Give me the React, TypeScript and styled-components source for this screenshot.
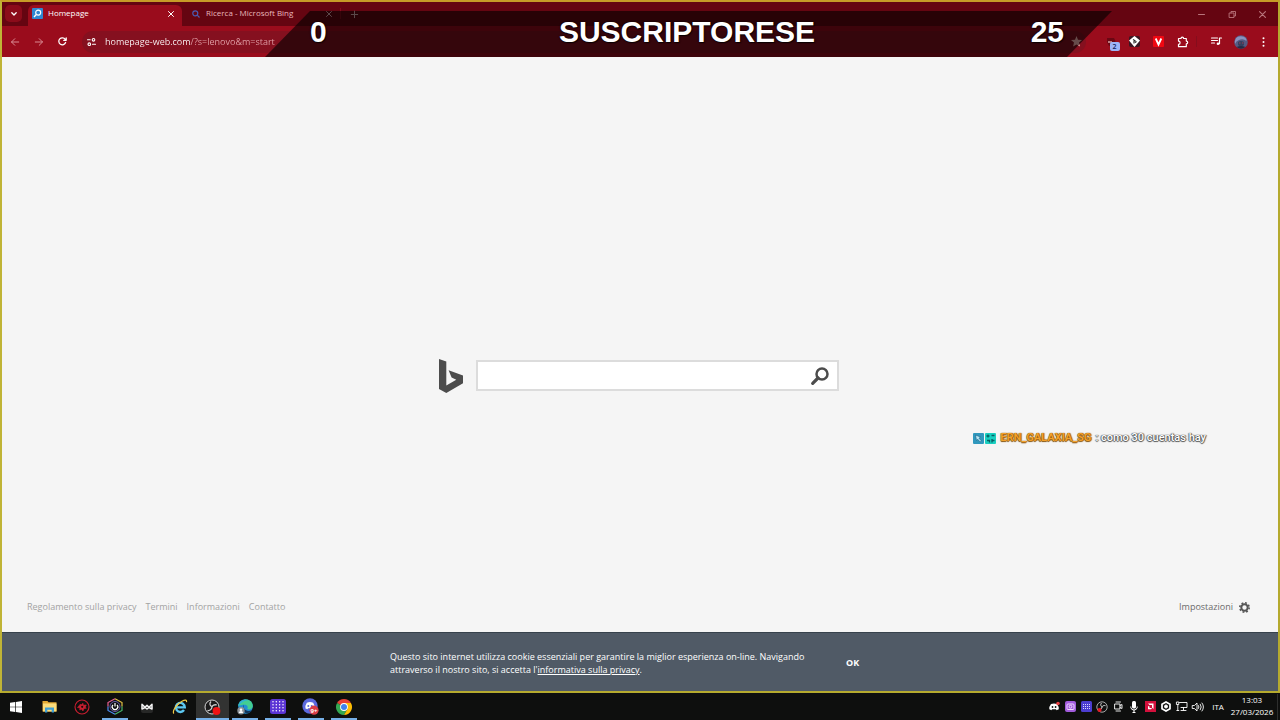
import React from "react";
import styled, { createGlobalStyle } from "styled-components";

const ui = `"Open Sans", "Noto Sans", sans-serif`;

const Global = createGlobalStyle`
  * { box-sizing: border-box; }
  html, body { margin: 0; padding: 0; background: #0e0f0e; }
  body { font-family: ${ui}; }
  button, input { font: inherit; border: 0; padding: 0; margin: 0; background: none; color: inherit; outline: none; }
  svg { display: block; flex: none; overflow: visible; }
`;

const Desktop = styled.div`
  min-height: 100vh;
  display: flex;
  flex-direction: column;
`;

const BrowserWindow = styled.section`
  position: relative;
  flex: 1;
  display: flex;
  flex-direction: column;
  border: 2px solid #b5aa2e;
  border-top-color: #c79b27;
  border-left-color: #c0b436;
  background: #f5f5f5;
`;

/* ---------- browser chrome ---------- */

const TabStrip = styled.div`
  height: 24px;
  padding: 3px 2px 0 3px;
  display: flex;
  align-items: stretch;
  background: #650511;
  color: #e2b3b7;
  font-size: 8px;
`;

const TabSearch = styled.button`
  width: 17px;
  height: 17px;
  margin-right: 6px;
  border-radius: 5px;
  background: #8b0b1a;
  display: grid;
  place-items: center;
  color: #fff;
`;

const Tab = styled.div<{ $active?: boolean }>`
  width: ${(p) => (p.$active ? 154 : 157)}px;
  padding: 0 ${(p) => (p.$active ? 8 : 7)}px 4px ${(p) => (p.$active ? 4 : 10)}px;
  display: flex;
  align-items: center;
  gap: ${(p) => (p.$active ? 5 : 6)}px;
  border-radius: 6px 6px 0 0;
  background: ${(p) => (p.$active ? "#9a0c1c" : "transparent")};
  color: ${(p) => (p.$active ? "#fff" : "#e8b7bc")};
`;

const TabTitle = styled.span`
  flex: 1;
  white-space: nowrap;
  line-height: 12px;
  padding-bottom: 1px;
`;

const IconButton = styled.button<{ $w?: number }>`
  width: ${(p) => p.$w ?? 24}px;
  height: 18px;
  display: grid;
  place-items: center;
`;

const Divider = styled.span`
  width: 1px;
  height: 11px;
  margin: 3px 1px;
  background: #850d1c;
`;

const WindowControls = styled.div`
  margin-left: auto;
  display: flex;
  color: #b9757c;
`;

const Toolbar = styled.div`
  height: 31px;
  padding: 0;
  display: flex;
  align-items: center;
  background: #9a0c1c;
  color: #fff;
`;

const Faded = styled.span`
  display: flex;
  color: #d98a92;
`;

const AddressBar = styled.label`
  flex: 1;
  height: 22px;
  margin: 0 13px 0 8px;
  padding: 0 4px 0 5px;
  display: flex;
  align-items: center;
  gap: 9px;
  border-radius: 11px;
  background: #85101f;
`;

const AddressInput = styled.input`
  flex: 1;
  min-width: 0;
  height: 16px;
  font-size: 9px;
  color: transparent;
  background: linear-gradient(90deg, #ffffff 85px, #e3a3aa 85px);
  background-clip: text;
  -webkit-background-clip: text;
`;

const Extensions = styled.div`
  display: flex;
  align-items: center;
`;

const Badged = styled.span`
  position: relative;
  display: grid;
`;

const Badge = styled.span`
  position: absolute;
  left: 4px;
  top: 5px;
  width: 10px;
  height: 9px;
  border-radius: 2px;
  background: #9db4f7;
  color: #14235c;
  font-size: 7px;
  line-height: 9px;
  font-weight: 600;
  text-align: center;
`;

/* ---------- stream overlays ---------- */

const Goal = styled.div`
  position: absolute;
  top: 9px;
  left: 263px;
  right: 166px;
  height: 46px;
  padding: 0 48px 4px 45px;
  display: grid;
  grid-template-columns: 1fr auto 1fr;
  align-items: center;
  clip-path: polygon(45px 0, 100% 0, calc(100% - 45px) 100%, 0 100%);
  background: rgba(0, 0, 0, 0.6);
  color: #fff;
  font: bold 30px "Liberation Sans", Arial, sans-serif;
  text-shadow: 0 0 2px #000, 1px 1px 1px rgba(0, 0, 0, 0.7);
  & > :last-child { text-align: right; }
`;

const Chat = styled.p`
  position: absolute;
  right: 72px;
  top: 428px;
  margin: 0;
  display: flex;
  align-items: center;
  gap: 4px;
  color: #fff;
  font: 500 11px/16px Roboto, "Open Sans", sans-serif;
  text-shadow: 0 0 1px #333, 1px 0 1px #666, 0 1px 1px #555, -1px 0 1px #888;
`;

const ChatName = styled.strong`
  color: #f3a12c;
  font-weight: 700;
  text-shadow: 0 0 1px #6b3d00, 1px 0 1px #9a6312, 0 1px 1px #85520a;
`;

const Badges = styled.span`
  display: flex;
  gap: 1px;
`;

/* ---------- page ---------- */

const Page = styled.main`
  flex: 1;
  display: flex;
  flex-direction: column;
`;

const SearchArea = styled.div`
  flex: 1;
  padding: 100px 2px 0 0;
  display: flex;
  align-items: center;
  justify-content: center;
`;

const SearchForm = styled.form`
  display: flex;
  align-items: center;
  gap: 13px;
`;

const SearchBox = styled.div`
  width: 363px;
  height: 31px;
  display: flex;
  border: 2px solid #dcdcdc;
  background: #fff;
`;

const SearchInput = styled.input`
  flex: 1;
  padding: 0 8px;
  color: #333;
  font-size: 12px;
`;

const SearchButton = styled.button`
  width: 34px;
  display: grid;
  place-items: center;
`;

const FooterRow = styled.footer`
  height: 38px;
  padding: 6px 28px 0 25px;
  display: flex;
  justify-content: space-between;
  align-items: flex-start;
  font-size: 9px;
  line-height: 14px;
`;

const FooterLinks = styled.nav`
  display: flex;
  gap: 9px;
`;

const FooterLink = styled.a<{ $dark?: boolean }>`
  display: flex;
  align-items: center;
  gap: 6px;
  color: ${(p) => (p.$dark ? "#6a6a6a" : "#a3a3a3")};
  text-decoration: none;
`;

const CookieBar = styled.aside`
  height: 59px;
  display: flex;
  align-items: center;
  justify-content: center;
  gap: 24px;
  border-top: 1px solid #37424c;
  background: #505a66;
  color: #fff;
  font-size: 9px;
  line-height: 13px;
`;

const CookieText = styled.p`
  width: 432px;
  margin: 2px 0 0;
`;

const CookieLink = styled.a`
  color: inherit;
`;

const CookieOk = styled.button`
  width: 32px;
  height: 20px;
  margin-right: 12px;
  text-align: left;
  font-weight: 700;
`;

/* ---------- taskbar ---------- */

const Taskbar = styled.footer`
  height: 27px;
  padding-right: 2px;
  display: flex;
  justify-content: space-between;
  background: #0e0f0e;
  color: #fff;
`;

const Apps = styled.div`
  width: 360px;
  display: grid;
  grid-template-columns: repeat(11, 1fr);
`;

const AppButton = styled.button<{ $running?: boolean; $active?: boolean }>`
  display: grid;
  place-items: center;
  background: ${(p) => (p.$active ? "#323332" : "transparent")};
  &::after {
    content: "";
    grid-area: 1 / 1;
    align-self: end;
    width: ${(p) => (p.$active ? "100%" : "26px")};
    height: 2px;
    background: ${(p) => (p.$running ? "#76b0e8" : "transparent")};
  }
  & > svg { grid-area: 1 / 1; }
`;

const Tray = styled.div`
  display: flex;
  align-items: center;
  font-size: 8px;
`;

const TrayButton = styled.button<{ $w?: number }>`
  width: ${(p) => p.$w ?? 16}px;
  height: 27px;
  display: grid;
  place-items: center;
`;

const Clock = styled.time`
  width: 48px;
  padding: 0 3px 2px 0;
  display: block;
  text-align: center;
  line-height: 12px;
  border-right: 1px solid #2d2e2d;
`;

const stroke = { fill: "none", stroke: "currentColor", strokeLinecap: "round", strokeLinejoin: "round" } as const;

const Cross = ({ size = 6 }: { size?: number }) => (
  <svg width={size} height={size} viewBox="0 0 6 6" {...stroke} strokeWidth="1"><path d="M.5.5l5 5M5.5.5l-5 5" /></svg>
);

const BingLogo = () => (
  <svg width="24" height="34" viewBox="0 0 24 34" fill="#4c4c4c" aria-label="Bing">
    <path d="M0 0L7.3 2.6V26.6L17.3 20.7L12.6 18.6L9.6 11.3L24 16.4V24.3L7.3 34L0 30Z" />
  </svg>
);

const taskIcons: { name: string; running?: boolean; active?: boolean; icon: React.ReactNode }[] = [
  { name: "Start", icon: <svg width="12" height="12" viewBox="0 0 12 12" fill="#fff"><path d="M0 1.8L5.2 1v4.7H0zM5.9.9L12 0v5.7H5.9zM0 6.3h5.2V11L0 10.2zM5.9 6.3H12V12l-6.1-.9z" /></svg> },
  { name: "Esplora file", icon: <svg width="15" height="13" viewBox="0 0 15 13"><path d="M.5 1h5l1 1.2h8V11.500H.5z" fill="#e3a934" /><path d="M1 3.500h13.500v8H1z" fill="#fbdc7c" /><path d="M3 12.500V7.500h9v5H9.700V9.800H5.300v2.700z" fill="#3f9fd6" /></svg> },
  { name: "Gioco", icon: <svg width="16" height="16" viewBox="0 0 16 16" fill="none" stroke="#c81f30"><circle cx="8" cy="8" r="7" strokeWidth="1.100" /><path d="M3.500 8.500L6.500 5l.3 1.200L9 4.200l.3 2 3-.2L11.300 8l1 1.300-2.300.2-1 2.500-1.500-1.700-1.800.7L6 9z" fill="#c81f30" strokeWidth=".6" /><circle cx="8.200" cy="7.800" r="1.100" fill="#1a0808" stroke="none" /></svg> },
  { name: "Centro energia", running: true, icon: <svg width="16" height="17" viewBox="0 0 16 17" fill="none" strokeWidth="1.200"><path d="M1 8.500V4.500L8 .7" stroke="#e85f91" /><path d="M8 .7l7 3.800v4" stroke="#e5c144" /><path d="M15 8.500v4L8 16.300" stroke="#47b86c" /><path d="M8 16.300L1 12.500v-4" stroke="#4c8df0" /><circle cx="8" cy="8.500" r="5" stroke="#7c70cf" strokeWidth=".8" /><path d="M6 6.800a2.800 2.800 0 1 0 4 0M8 5v3.500" stroke="#fff" /></svg> },
  { name: "Mixer", icon: <svg width="14" height="13" viewBox="0 0 14 13"><rect x="1" y="6" width="12" height="7" rx="2" fill="#272827" /><path d="M2 9V4.300L5 7.300 7 5.300 9 7.300 12 4.300V9L9 7.500 7 9 5 7.500z" fill="none" stroke="#f2f2f2" strokeWidth="1.500" strokeLinejoin="round" /></svg> },
  { name: "Internet Explorer", icon: <svg width="16" height="16" viewBox="0 0 16 16" fill="none"><path d="M4.200 8.400h8.600A4.500 4.500 0 1 0 12 11" stroke="#5dc9f2" strokeWidth="2.400" /><path d="M2 14.500C-.5 13 4.500 5 10 2.200c3-1.500 5-1.500 4.500 1" stroke="#f3cb45" strokeWidth="1.200" /></svg> },
  { name: "OBS Studio", running: true, active: true, icon: <svg width="17" height="16" viewBox="0 0 17 16"><circle cx="8" cy="8" r="7" fill="#1b1b1b" stroke="#d5d5d5" strokeWidth="1" /><path d="M7 2.500c-2 2-1 4.500 1 5M12.800 6c-2.300-.8-4.500.5-4.800 2M3.500 11.500c2.500.5 4.500-1.500 4.500-4" fill="none" stroke="#cfcfcf" strokeWidth="1.300" /><circle cx="12.500" cy="12" r="3.900" fill="#ef1313" /></svg> },
  { name: "Microsoft Edge", running: true, icon: <svg width="16" height="16" viewBox="0 0 16 16"><circle cx="8.500" cy="7.500" r="7.300" fill="#238fd4" /><path d="M1.300 7C2-1.500 15.500-2 15.800 7c0 3.500-4 4-5.600 2.800 1.200-1.500.3-4-2.700-4C5 5.800 2.500 6.500 1.300 7z" fill="#43ce91" /><path d="M1.300 7C2 1 8-.5 11.500 1.500 7 1 4 4 1.300 7z" fill="#2fb0d8" /><path d="M7 5.500q-1.500 3 1.500 5.500 3 1.800 6 .3l.5.500Q11 16 7 13z" fill="#12365c" /><circle cx="4" cy="11.800" r="3.700" fill="#8d9297" /><circle cx="4" cy="10.700" r="1.300" fill="#fff" /><path d="M1.900 14a2.100 2.100 0 0 1 4.200 0z" fill="#fff" /></svg> },
  { name: "Tastiera", running: true, icon: <svg width="16" height="15" viewBox="0 0 16 15"><rect width="16" height="15" rx="2.500" fill="#5b35d5" /><g fill="#fff">{[3, 6, 9, 12].map((y) => [3, 6.300, 9.600, 13].map((x) => <circle key={`${x}-${y}`} cx={x} cy={y - 0.2} r=".75" />))}</g></svg> },
  { name: "Discord", running: true, icon: <svg width="17" height="17" viewBox="0 0 17 17"><circle cx="8" cy="8" r="7.700" fill="#5b69df" /><path d="M4.800 4.800Q8 3.300 11.200 4.800 13 7.500 12.500 10.500L10.500 11.300 10 10.300H6L5.500 11.300 3.500 10.500Q3 7.500 4.800 4.800z" fill="#fff" /><circle cx="6.300" cy="8" r="1" fill="#5b69df" /><circle cx="9.700" cy="8" r="1" fill="#5b69df" /><circle cx="12" cy="12.200" r="4.600" fill="#d93c47" /><text x="12" y="14.500" fill="#fff" fontSize="6" fontWeight="700" textAnchor="middle">9+</text></svg> },
  { name: "Google Chrome", running: true, icon: <svg width="16" height="16" viewBox="0 0 16 16"><path d="M8 8L1.070 4A8 8 0 0 1 14.930 4z" fill="#e94235" /><path d="M1.070 4A8 8 0 0 0 8 16l3.500-6L8 8z" fill="#34a853" /><path d="M8 16A8 8 0 0 0 14.930 4H8l3.500 6z" fill="#fbbc04" /><circle cx="8" cy="8" r="3.900" fill="#fff" /><circle cx="8" cy="8" r="3" fill="#3f82ee" /></svg> },
];

const trayIcons: { name: string; icon: React.ReactNode }[] = [
  { name: "Discord", icon: <svg width="11" height="9" viewBox="0 0 11 9"><path d="M2 2Q5 .8 8 2 10 4.500 9.800 7.300L7.500 8.300 7 7.300H3L2.500 8.300.3 7.300Q0 4.500 2 2z" fill="#fff" /><circle cx="3.500" cy="5" r=".9" fill="#111" /><circle cx="6.600" cy="5" r=".9" fill="#111" /><circle cx="9" cy="1.500" r="1.800" fill="#ec4245" /></svg> },
  { name: "Cattura", icon: <svg width="11" height="11" viewBox="0 0 11 11" fill="none" stroke="#f0d8ff"><rect width="11" height="11" rx="2" fill="#a15bdc" stroke="none" /><rect x="2" y="3" width="7" height="5.500" rx="1" /><circle cx="5.500" cy="5.700" r="1.400" /></svg> },
  { name: "Tastiera", icon: <svg width="11" height="11" viewBox="0 0 11 11"><rect width="11" height="11" rx="1.500" fill="#4c3dd0" /><path d="M2 3.500h7M2 5.500h7M2 7.500h7" stroke="#d9d5ff" strokeDasharray="1 1" /></svg> },
  { name: "OBS", icon: <svg width="12" height="12" viewBox="0 0 12 12"><circle cx="6" cy="6" r="5.200" fill="#111" stroke="#d0d0d0" strokeWidth=".8" /><path d="M5.500 2c-1.500 1.500-.5 3.500.5 3.700M9.500 4.700C7.800 4 6 5 6 6.500M3 8.500c1.800.3 3-1 3-2.800" fill="none" stroke="#ccc" /><circle cx="3.500" cy="9" r="2.100" fill="#e31b23" /></svg> },
  { name: "Videocamera", icon: <svg width="9" height="11" viewBox="0 0 9 11" {...stroke} strokeWidth=".9"><path d="M2 1h4.500M2 10h4.500M1 3h5v5H1zM6 4.500l2-1v4l-2-1" /></svg> },
  { name: "Microfono", icon: <svg width="8" height="12" viewBox="0 0 8 12"><rect x="2" width="4" height="7.500" rx="1.500" fill="#fff" /><path d="M.8 5.500v1q.4 2.500 3.200 2.500t3.200-2.500v-1M4 9v2.500M2.500 11.500h3" fill="none" stroke="#fff" /></svg> },
  { name: "AMD", icon: <svg width="11" height="11" viewBox="0 0 11 11"><rect width="11" height="11" fill="#d3103c" /><path d="M3 2.500h5.500V8L7 6.500V4H4.500zM3 5v3.200h3.200L7 7H4.500V5.500z" fill="#fff" /></svg> },
  { name: "Sicurezza", icon: <svg width="10" height="11" viewBox="0 0 10 11" fill="none" stroke="#fff"><path d="M5 1l4 2.200v4.600L5 10 1 7.800V3.200z" strokeWidth="1.700" /><circle cx="5" cy="5.500" r="1.500" fill="#fff" /></svg> },
  { name: "Rete", icon: <svg width="12" height="11" viewBox="0 0 12 11" {...stroke} strokeWidth=".9"><path d="M3.500 1.500H11v5H5M7.500 6.500V9M5 9.500h5M.8 1h2v2.500h-2zM1.800 3.500v6M.8 9.500h2" /></svg> },
  { name: "Volume", icon: <svg width="12" height="10" viewBox="0 0 12 10" {...stroke} strokeWidth=".9"><path d="M.6 3.500h1.800L5 1v8L2.400 6.500H.6zM6.500 3.500q1 1.500 0 3M8.300 2.200q2 2.800 0 5.600M10 1q3 4 0 8" /></svg> },
];

export default function App() {
  return (
    <Desktop>
      <Global />
      <BrowserWindow>
        <TabStrip>
          <TabSearch aria-label="Cerca tra le schede">
            <svg width="6" height="4" viewBox="0 0 6 4" {...stroke} strokeWidth="1.300"><path d="M.8.7L3 3l2.200-2.300" /></svg>
          </TabSearch>
          <Tab $active>
            <svg width="11" height="11" viewBox="0 0 11 11" fill="none" stroke="#fff"><rect width="11" height="11" rx="1" fill="#2f87d0" stroke="none" /><circle cx="6.200" cy="4.600" r="2.500" strokeWidth="1.200" /><path d="M4.300 6.600L2 9" strokeWidth="1.400" /></svg>
            <TabTitle>Homepage</TabTitle>
            <button aria-label="Chiudi scheda"><Cross /></button>
          </Tab>
          <Tab>
            <svg width="8" height="8" viewBox="0 0 8 8" fill="none" stroke="#4a5cb4" strokeWidth="1.200"><circle cx="3.300" cy="3.300" r="2.500" /><path d="M5.200 5.200L7.500 7.500" /></svg>
            <TabTitle>Ricerca - Microsoft Bing</TabTitle>
            <button aria-label="Chiudi scheda"><Cross /></button>
          </Tab>
          <Divider />
          <IconButton aria-label="Nuova scheda">
            <svg width="7" height="7" viewBox="0 0 7 7" {...stroke}><path d="M3.500.3v6.400M.3 3.500h6.400" /></svg>
          </IconButton>
          <WindowControls>
            <IconButton $w={30} aria-label="Riduci a icona"><svg width="7" height="7" viewBox="0 0 7 7" {...stroke}><path d="M.5 3.500h6" /></svg></IconButton>
            <IconButton $w={32} aria-label="Ripristina"><svg width="7" height="7" viewBox="0 0 7 7" {...stroke} strokeWidth=".9"><path d="M.5 2h4.500v4.500H.5zM2 2V.5h4.500V5H5" /></svg></IconButton>
            <IconButton $w={28} aria-label="Chiudi"><Cross size={7} /></IconButton>
          </WindowControls>
        </TabStrip>

        <Toolbar>
          <Faded>
            <IconButton $w={25} aria-label="Indietro"><svg width="8" height="8" viewBox="0 0 8 8" {...stroke}><path d="M7.700 4H.5M3.800.7L.5 4l3.300 3.300" /></svg></IconButton>
            <IconButton aria-label="Avanti"><svg width="8" height="8" viewBox="0 0 8 8" {...stroke}><path d="M.3 4h7.200M4.200.7L7.500 4 4.200 7.300" /></svg></IconButton>
          </Faded>
          <IconButton $w={23} aria-label="Ricarica"><svg width="9" height="9" viewBox="0 0 9 9" {...stroke} strokeWidth="1.300"><path d="M7.600 5.500A3.500 3.500 0 1 1 7.200 2.300L8 3.200M8.200.8v2.500H5.700" /></svg></IconButton>
          <AddressBar>
            <svg width="9" height="8" viewBox="0 0 9 8" {...stroke} strokeWidth="1.100"><path d="M.5 1.800h2.700M5.500 6.200h3" /><circle cx="6.500" cy="1.800" r="1.300" /><circle cx="2.300" cy="6.200" r="1.300" /></svg>
            <AddressInput aria-label="Indirizzo" defaultValue="homepage-web.com/?s=lenovo&m=start" />
            <button aria-label="Aggiungi ai preferiti"><svg width="11" height="11" viewBox="0 0 11 11" fill="#ffbcb8"><path d="M5.500 0l1.500 3.700 4 .3-3 2.600.9 4L5.500 8.400 2.100 10.600l.9-4L0 4l4-.3z" /></svg></button>
          </AddressBar>
          <Extensions>
            <IconButton $w={23} aria-label="Estensione, 2 notifiche">
              <Badged>
                <svg width="10" height="10" viewBox="0 0 10 10"><path d="M1 1h7l1.500 3-1.500 5H3L1 5z" fill="#6b0713" /><path d="M2 5h4" stroke="#f3c9c9" strokeWidth="1.200" /></svg>
                <Badge>2</Badge>
              </Badged>
            </IconButton>
            <IconButton $w={24} aria-label="Estensione"><svg width="11" height="11" viewBox="0 0 11 11"><rect width="11" height="11" rx="2" fill="#3a1722" /><path d="M5.500 0L11 4.500 5.500 11 0 4.500z" fill="#fff" /><path d="M4 3.500l2.500 1.500M6 6.500l1.500-1M5 7.500V5" stroke="#222" strokeWidth="1.100" /></svg></IconButton>
            <IconButton $w={24} aria-label="Estensione"><svg width="11" height="11" viewBox="0 0 11 11"><rect width="11" height="11" rx="1" fill="#f00812" /><path d="M2.700 2.500L5.500 8.500 8.300 2.500" fill="none" stroke="#fff" strokeWidth="1.800" /></svg></IconButton>
            <IconButton $w={25} aria-label="Estensioni"><svg width="12" height="12" viewBox="0 0 12 12" {...stroke} strokeWidth="1.200"><path d="M1.500 2.500H4a1.300 1.300 0 0 1 2.600 0h2.700v2.600a1.400 1.400 0 0 1 0 2.800v2.800H1.500V8.300a1.600 1.600 0 0 0 0-3.200z" /></svg></IconButton>
            <Divider />
            <IconButton $w={36} aria-label="Contenuti multimediali"><svg width="11" height="9" viewBox="0 0 11 9" {...stroke} strokeWidth="1.200"><path d="M.5 1h6M.5 3.500h6M.5 6h3M8.500 6.700V1h2" /><circle cx="7" cy="6.800" r="1.300" fill="currentColor" stroke="none" /></svg></IconButton>
            <IconButton $w={14} aria-label="Profilo"><svg width="14" height="14" viewBox="0 0 14 14"><circle cx="7" cy="7" r="6.800" fill="#565a82" /><path d="M1 9Q0 1 7 1.200 13 2 12.500 6 9 3 5 5 2 6 1 9z" fill="#8a91bd" /><path d="M4 7q3-2 6 0v3q-3 3-6 0z" fill="#35405f" /><path d="M5 8h1.500M8 8h1.500" stroke="#a33a58" /><path d="M2.500 12q4.500-2 9 0Q7 15.500 2.500 12z" fill="#242b45" /></svg></IconButton>
            <IconButton $w={30} aria-label="Menu"><svg width="3" height="10" viewBox="0 0 3 10" fill="#fff"><circle cx="1.500" cy="1.200" r="1" /><circle cx="1.500" cy="5" r="1" /><circle cx="1.500" cy="8.800" r="1" /></svg></IconButton>
          </Extensions>
        </Toolbar>

        <Page>
          <SearchArea>
            <SearchForm role="search" onSubmit={(e) => e.preventDefault()}>
              <BingLogo />
              <SearchBox>
                <SearchInput type="text" aria-label="Cerca" />
                <SearchButton type="submit" aria-label="Cerca">
                  <svg width="18" height="18" viewBox="0 0 18 18" fill="none" stroke="#4c4c4c"><circle cx="11" cy="7" r="5.500" strokeWidth="2.500" /><path d="M7 11l-5.300 5.300" strokeWidth="3.200" strokeLinecap="round" /></svg>
                </SearchButton>
              </SearchBox>
            </SearchForm>
          </SearchArea>
          <FooterRow>
            <FooterLinks>
              <FooterLink href="#privacy">Regolamento sulla privacy</FooterLink>
              <FooterLink href="#termini">Termini</FooterLink>
              <FooterLink href="#informazioni">Informazioni</FooterLink>
              <FooterLink href="#contatto">Contatto</FooterLink>
            </FooterLinks>
            <FooterLink $dark href="#impostazioni">
              Impostazioni
              <svg width="11" height="11" viewBox="0 0 11 11" fill="none" stroke="#565656"><circle cx="5.500" cy="5.500" r="3.200" strokeWidth="2" /><circle cx="5.500" cy="5.500" r="4.700" strokeWidth="1.600" strokeDasharray="1.850 1.841" /></svg>
            </FooterLink>
          </FooterRow>
        </Page>

        <CookieBar>
          <CookieText>
            Questo sito internet utilizza cookie essenziali per garantire la miglior esperienza on-line. Navigando
            <br />
            attraverso il nostro sito, si accetta l'<CookieLink href="#informativa">informativa sulla privacy</CookieLink>.
          </CookieText>
          <CookieOk>OK</CookieOk>
        </CookieBar>

        <Goal>
          <span>0</span>
          <span>SUSCRIPTORESE</span>
          <span>25</span>
        </Goal>
        <Chat>
          <Badges>
            <svg width="11" height="11" viewBox="0 0 11 11"><rect width="11" height="11" rx="1" fill="#3098bd" /><path d="M2.500 2l5 2-1.500 1.300L8.500 8 7 9 4.800 6.300 3.500 7.500z" fill="#b9e7f3" stroke="#1c5f85" strokeWidth=".6" /></svg>
            <svg width="11" height="11" viewBox="0 0 11 11"><rect width="11" height="11" rx="1" fill="#19cfc0" /><path d="M1.500 3h3M3 1.500v3M6.500 2.500h3M2 7.500h2.500v2M7 6v3.500M7 7.500h2.500" stroke="#075e62" strokeWidth="1.300" fill="none" /></svg>
          </Badges>
          <ChatName>ERN_GALAXIA_SG</ChatName>
          <span>: como 30 cuentas hay</span>
        </Chat>
      </BrowserWindow>

      <Taskbar>
        <Apps>
          {taskIcons.map((t) => (
            <AppButton key={t.name} aria-label={t.name} $running={t.running} $active={t.active}>{t.icon}</AppButton>
          ))}
        </Apps>
        <Tray>
          {trayIcons.map((t) => (
            <TrayButton key={t.name} aria-label={t.name}>{t.icon}</TrayButton>
          ))}
          <TrayButton $w={24}>ITA</TrayButton>
          <Clock>13:03<br />27/03/2026</Clock>
        </Tray>
      </Taskbar>
    </Desktop>
  );
}
